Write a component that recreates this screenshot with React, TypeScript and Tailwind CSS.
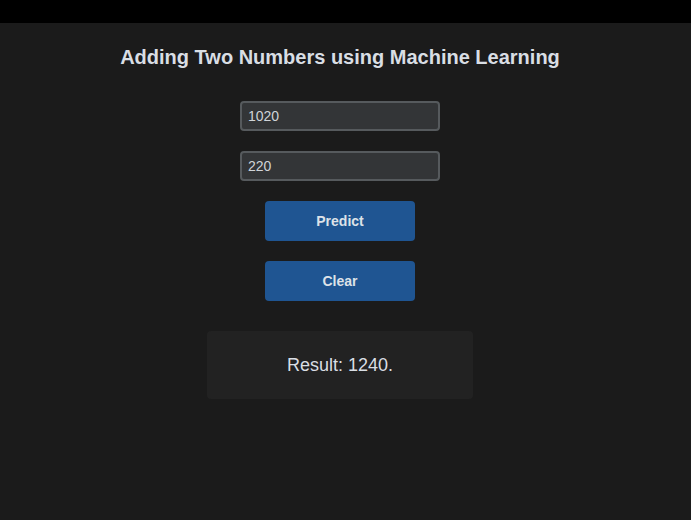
import { useEffect, useRef, useState } from "react";

export default function App() {
  const [a, setA] = useState("1020");
  const [b, setB] = useState("220");
  const [result, setResult] = useState<string | null>("1240");
  const secondRef = useRef<HTMLInputElement>(null);

  useEffect(() => {
    const el = secondRef.current;
    if (el) {
      el.focus();
      el.setSelectionRange(el.value.length, el.value.length);
    }
  }, []);

  const predict = () => {
    const sum = Number(a) + Number(b);
    setResult(Number.isFinite(sum) ? String(sum) : null);
  };

  const clear = () => {
    setA("");
    setB("");
    setResult(null);
  };

  return (
    <div className="min-h-[520px] bg-[#1b1b1b] font-['Liberation_Sans',Arial,sans-serif] text-[#d9dee4]">
      <div className="h-[23px] bg-black" />
      <div className="flex w-[680px] flex-col items-center pt-[21px]">
        <h1 className="text-[20px] font-bold leading-[26px]">
          Adding Two Numbers using Machine Learning
        </h1>
        <input
          value={a}
          onChange={(e) => setA(e.target.value)}
          className="mt-[31px] h-[30px] w-[200px] rounded-[4px] border-2 border-[#565a5d] bg-[#333537] px-[6px] text-[14px] text-[#d0d4d8] caret-[#d0d4d8] outline-none"
        />
        <input
          ref={secondRef}
          value={b}
          onChange={(e) => setB(e.target.value)}
          className="mt-[20px] h-[30px] w-[200px] rounded-[4px] border-2 border-[#565a5d] bg-[#333537] px-[6px] text-[14px] text-[#d0d4d8] caret-[#d0d4d8] outline-none"
        />
        <button
          onClick={predict}
          className="mt-[20px] h-[40px] w-[150px] rounded-[4px] bg-[#1f5592] text-[14px] font-bold text-[#dde2e8]"
        >
          Predict
        </button>
        <button
          onClick={clear}
          className="mt-[20px] h-[40px] w-[150px] rounded-[4px] bg-[#1f5592] text-[14px] font-bold text-[#dde2e8]"
        >
          Clear
        </button>
        <div className="mt-[30px] flex h-[68px] w-[266px] items-center justify-center rounded-[4px] bg-[#222222] text-[18px]">
          {result !== null ? `Result: ${result}.` : ""}
        </div>
      </div>
    </div>
  );
}
